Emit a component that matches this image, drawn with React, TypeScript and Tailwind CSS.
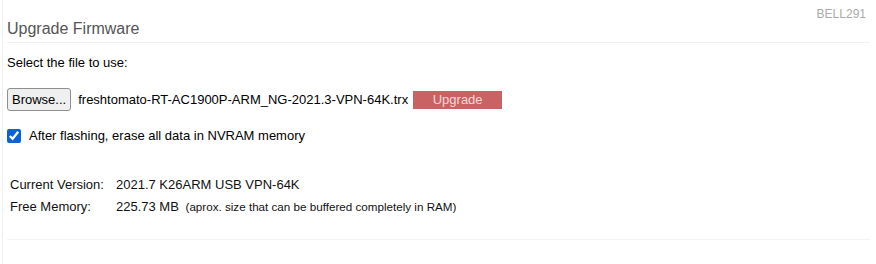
import React from "react";

export default function App() {
  return (
    <div className="w-[876px] h-[264px] bg-white overflow-hidden" style={{ fontFamily: '"Liberation Sans", Arial, sans-serif' }}>
      <div className="ml-[2px] border-l border-[#f0f0f0] h-full pl-[4px] pr-[6px] relative">
        <div className="absolute right-[10px] top-[5px] text-[12px] text-[#aaaaaa]">BELL291</div>
        <div className="pt-[19px] pb-[3px] border-b border-[#f0f0f0] text-[16px] text-[#555555] leading-[20px]">Upgrade Firmware</div>
        <div className="pt-[12px] text-[13px] text-black leading-[16px]">Select the file to use:</div>
        <div className="flex items-center mt-[17px] text-[13px] leading-[16px]">
          <button className="h-[23px] px-[4px] border border-[#8f8f8f] rounded-[3px] bg-[#efefef] text-black text-[13px]">Browse...</button>
          <span className="ml-[7px] text-black">freshtomato-RT-AC1900P-ARM_NG-2021.3-VPN-64K.trx</span>
          <button className="ml-[5px] w-[89px] h-[18px] bg-[#c96262] text-[#f6d6d6] text-[13px] leading-[18px]">Upgrade</button>
        </div>
        <label className="flex items-center mt-[17px] text-[13px] leading-[16px] text-black">
          <input type="checkbox" defaultChecked className="w-[14px] h-[14px] m-0 accent-[#0b62d6]" />
          <span className="ml-[8px]">After flashing, erase all data in NVRAM memory</span>
        </label>
        <div className="mt-[30px] ml-[3px] text-[13px] leading-[22px] text-[#111]">
          <div className="flex">
            <span className="w-[106px]">Current Version:</span>
            <span>2021.7 K26ARM USB VPN-64K</span>
          </div>
          <div className="flex">
            <span className="w-[106px]">Free Memory:</span>
            <span>225.73 MB <span className="ml-[3px] text-[11.65px]">(aprox. size that can be buffered completely in RAM)</span></span>
          </div>
        </div>
        <div className="mt-[21px] border-b border-[#f3f3f3]" />
      </div>
    </div>
  );
}
